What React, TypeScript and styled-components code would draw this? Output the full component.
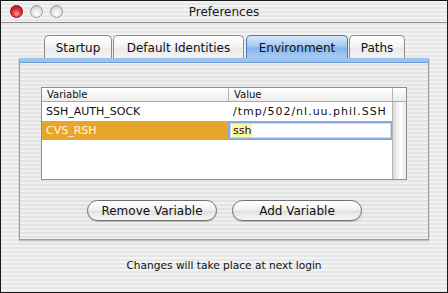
import React from 'react';
import styled, { createGlobalStyle } from 'styled-components';

const GlobalStyle = createGlobalStyle`
  body {
    margin: 0;
    font-family: 'DejaVu Sans', 'Liberation Sans', sans-serif;
    color: #111;
  }
`;

const pinstripe = 'repeating-linear-gradient(to bottom, #f3f3f3 0px, #f3f3f3 2px, #e6e6e6 2px, #e6e6e6 4px)';

const Window = styled.div`
  width: 448px;
  height: 293px;
  box-sizing: border-box;
  border: 1px solid #1a1a1a;
  background: ${pinstripe};
  display: flex;
  flex-direction: column;
`;

const TitleBar = styled.div`
  height: 21px;
  border-bottom: 1px solid #8f8f8f;
  display: grid;
  grid-template-columns: 1fr auto 1fr;
  align-items: center;
`;

const Lights = styled.div`
  display: flex;
  gap: 7px;
  padding-left: 9px;
`;

const Light = styled.div<{ red?: boolean }>`
  width: 13px;
  height: 13px;
  border-radius: 50%;
  box-sizing: border-box;
  border: 1px solid ${({ red }) => (red ? '#7a0d0d' : '#9a9a9a')};
  background: ${({ red }) => (red
    ? 'radial-gradient(circle at 50% 70%, #ff9a9a 0%, #e23333 45%, #a30f0f 100%)'
    : 'radial-gradient(circle at 50% 70%, #ffffff 0%, #e4e4e4 50%, #bdbdbd 100%)')};
`;

const Title = styled.div`
  font-size: 12px;
  color: #1a1a1a;
`;

const TabRow = styled.div`
  display: flex;
  margin-top: 12px;
  padding-left: 43px;
  height: 23px;
`;

const Tab = styled.div<{ w: number; gap: number; active?: boolean }>`
  width: ${({ w }) => w}px;
  margin-right: ${({ gap }) => gap}px;
  box-sizing: border-box;
  display: flex;
  align-items: center;
  justify-content: center;
  padding-top: 1px;
  font-size: 12px;
  color: #111;
  border: 1px solid ${({ active }) => (active ? '#4a74b8' : '#8c8c8c')};
  border-bottom: none;
  border-radius: 5px 5px 0 0;
  background: ${({ active }) => (active
    ? 'linear-gradient(to bottom, #d6e8fb 0%, #a6cbf2 45%, #86b5ea 55%, #a9d0f6 100%)'
    : 'linear-gradient(to bottom, #ffffff 0%, #f4f4f4 50%, #e9e9e9 55%, #f4f4f4 100%)')};
`;

const Panel = styled.div`
  margin-left: 18px;
  width: 410px;
  height: 182px;
  box-sizing: border-box;
  border: 1px solid #9c9c9c;
  border-top: 4px solid #9dc2ee;
  box-shadow: 0 1px 2px rgba(0, 0, 0, 0.25), inset 0 1px 0 #6f9bd6;
  background: repeating-linear-gradient(to bottom, #efefef 0px, #efefef 2px, #e3e3e3 2px, #e3e3e3 4px);
  display: flex;
  flex-direction: column;
  align-items: center;
`;

const Table = styled.div`
  margin-top: 25px;
  width: 366px;
  height: 93px;
  box-sizing: border-box;
  border: 1px solid #8e8e8e;
  background: #fff;
  display: flex;
`;

const Main = styled.div`
  width: 350px;
  display: grid;
  grid-template-columns: 187px 1fr;
  grid-template-rows: 14px 19px 19px;
  align-content: start;
`;

const HeaderCell = styled.div<{ divider?: boolean }>`
  font-size: 10px;
  padding-left: 5px;
  display: flex;
  align-items: center;
  background: linear-gradient(to bottom, #ffffff, #ececec);
  border-bottom: 1px solid #a8a8a8;
  border-right: ${({ divider }) => (divider ? '1px solid #b4b4b4' : 'none')};
`;

const Cell = styled.div<{ selected?: boolean; spread?: number }>`
  font-size: 11px;
  padding-left: 4px;
  display: flex;
  align-items: center;
  white-space: nowrap;
  overflow: hidden;
  letter-spacing: ${({ spread }) => spread ?? 0}px;
  background: ${({ selected }) => (selected ? '#e8a52c' : 'transparent')};
  color: ${({ selected }) => (selected ? '#fff6dd' : '#111')};
`;

const EditCell = styled.div`
  display: flex;
  align-items: stretch;
  margin-left: -1px;
  margin-right: -1px;
`;

const Field = styled.div`
  flex: 1;
  box-sizing: border-box;
  border: 2px solid #86aae0;
  box-shadow: inset 0 0 0 1px #c9dbf3;
  background: #fff;
  font-size: 11px;
  display: flex;
  align-items: center;
  padding-left: 2px;
`;

const Highlight = styled.span`
  background: #fff5a6;
  padding: 0 1px;
`;

const Scroll = styled.div`
  flex: 1;
  display: flex;
  flex-direction: column;
  border-left: 1px solid #b4b4b4;
`;

const ScrollCap = styled.div`
  height: 13px;
  background: linear-gradient(to bottom, #ffffff, #ececec);
  border-bottom: 1px solid #a8a8a8;
`;

const ScrollTrack = styled.div`
  flex: 1;
  background: linear-gradient(to right, #d8d8d8, #f4f4f4 40%, #ffffff 60%, #e6e6e6);
`;

const Buttons = styled.div`
  display: flex;
  gap: 15px;
  margin-top: 20px;
  margin-left: 1px;
`;

const Button = styled.div`
  width: 130px;
  height: 21px;
  box-sizing: border-box;
  border: 1px solid #6f6f6f;
  border-radius: 11px;
  display: flex;
  align-items: center;
  justify-content: center;
  font-size: 12px;
  color: #111;
  background: linear-gradient(to bottom, #ffffff 0%, #f2f2f2 45%, #e2e2e2 55%, #f7f7f7 100%);
  box-shadow: 0 1px 1px rgba(0, 0, 0, 0.2);
`;

const Footer = styled.div`
  flex: 1;
  display: flex;
  align-items: center;
  justify-content: center;
  font-size: 10.6px;
  color: #111;
  padding-bottom: 3px;
`;

const tabs = [
  { label: 'Startup', w: 68, gap: 1 },
  { label: 'Default Identities', w: 131, gap: 2 },
  { label: 'Environment', w: 102, gap: 1 },
  { label: 'Paths', w: 56, gap: 0 },
];

export default function App() {
  return (
    <>
      <GlobalStyle />
      <Window>
        <TitleBar>
          <Lights>
            <Light red />
            <Light />
            <Light />
          </Lights>
          <Title>Preferences</Title>
          <div />
        </TitleBar>
        <TabRow>
          {tabs.map((t) => (
            <Tab key={t.label} w={t.w} gap={t.gap} active={t.label === 'Environment'}>
              {t.label}
            </Tab>
          ))}
        </TabRow>
        <Panel>
          <Table>
            <Main>
              <HeaderCell divider>Variable</HeaderCell>
              <HeaderCell>Value</HeaderCell>
              <Cell>SSH_AUTH_SOCK</Cell>
              <Cell spread={1}>/tmp/502/nl.uu.phil.SSH</Cell>
              <Cell selected>CVS_RSH</Cell>
              <EditCell>
                <Field>
                  <Highlight>ssh</Highlight>
                </Field>
              </EditCell>
            </Main>
            <Scroll>
              <ScrollCap />
              <ScrollTrack />
            </Scroll>
          </Table>
          <Buttons>
            <Button>Remove Variable</Button>
            <Button>Add Variable</Button>
          </Buttons>
        </Panel>
        <Footer>Changes will take place at next login</Footer>
      </Window>
    </>
  );
}
